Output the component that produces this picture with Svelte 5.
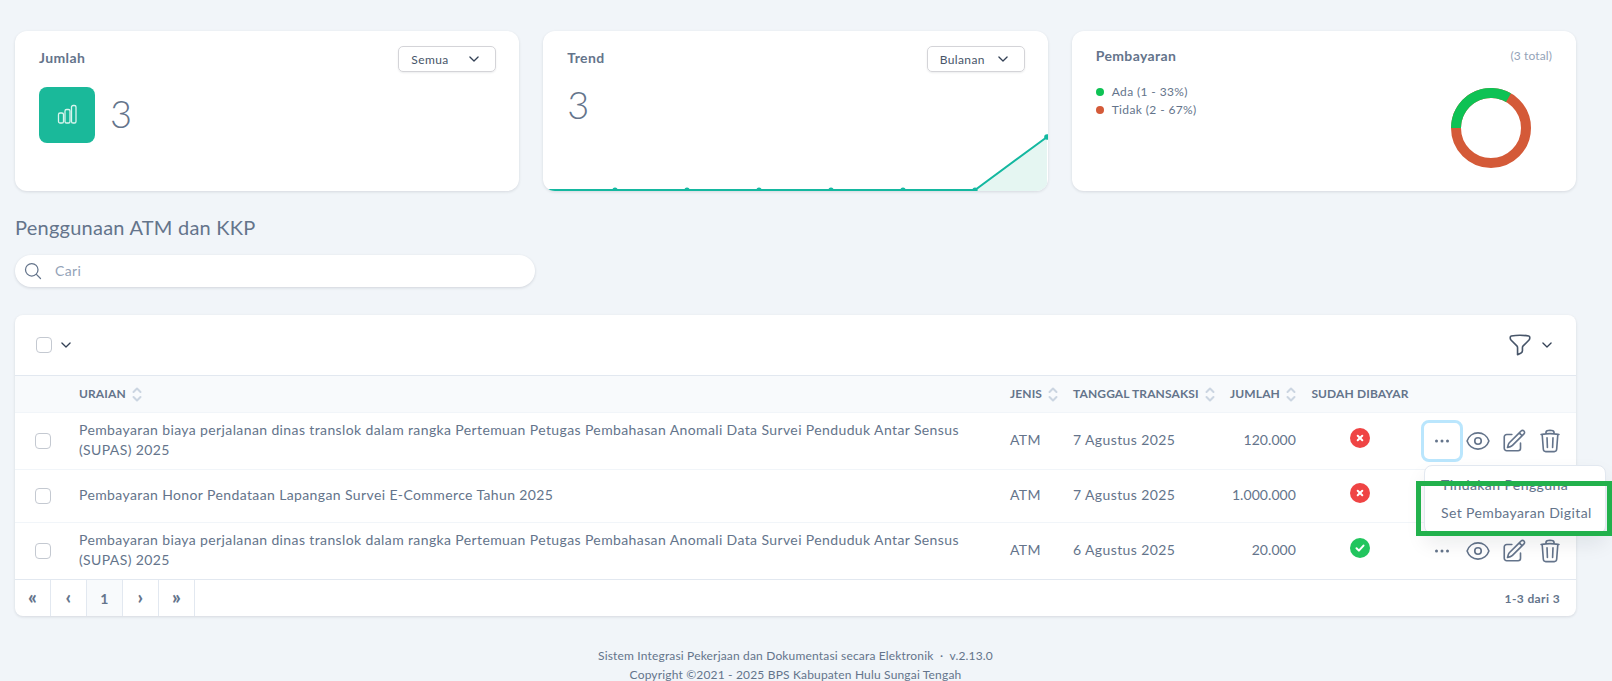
<script>
  const rows = [
    { text: 'Pembayaran biaya perjalanan dinas translok dalam rangka Pertemuan Petugas Pembahasan Anomali Data Survei Penduduk Antar Sensus (SUPAS) 2025', jenis: 'ATM', tanggal: '7 Agustus 2025', jumlah: '120.000', paid: false, menu: true },
    { text: 'Pembayaran Honor Pendataan Lapangan Survei E-Commerce Tahun 2025', jenis: 'ATM', tanggal: '7 Agustus 2025', jumlah: '1.000.000', paid: false, hideActions: true },
    { text: 'Pembayaran biaya perjalanan dinas translok dalam rangka Pertemuan Petugas Pembahasan Anomali Data Survei Penduduk Antar Sensus (SUPAS) 2025', jenis: 'ATM', tanggal: '6 Agustus 2025', jumlah: '20.000', paid: true }
  ];
  const dots = [615, 687, 759, 831, 903, 975];
  const pages = ['«', '‹', '1', '›', '»'];
</script>

{#snippet chevron()}
  <svg class="chev" viewBox="0 0 24 24" fill="none" stroke="currentColor" stroke-width="2.2" stroke-linecap="round" stroke-linejoin="round"><path d="M5 8.5l7 7 7-7" /></svg>
{/snippet}

{#snippet sort()}
  <svg class="sort" viewBox="0 0 10 15" fill="none" stroke="#cbd5e1" stroke-width="2" stroke-linecap="round" stroke-linejoin="round"><path d="M1.5 5L5 1.5 8.5 5M1.5 10L5 13.5 8.5 10" /></svg>
{/snippet}

<div class="page">
  <div class="stats">
    <section class="card">
      <div class="card-head">
        <h3>Jumlah</h3>
        <div class="select"><span>Semua</span>{@render chevron()}</div>
      </div>
      <div class="count-row">
        <div class="count-icon">
          <svg width="24" height="24" viewBox="0 0 24 24" fill="none" stroke="#d9f5ee" stroke-width="1.3"><rect x="3.5" y="10" width="5" height="10" rx="1.6" /><rect x="10" y="6.5" width="5" height="13.5" rx="1.6" /><rect x="16.5" y="2.5" width="4.5" height="17.5" rx="1.6" /></svg>
        </div>
        <div class="big">3</div>
      </div>
    </section>

    <section class="card trend">
      <div class="card-head">
        <h3>Trend</h3>
        <div class="select"><span>Bulanan</span>{@render chevron()}</div>
      </div>
      <div class="big trend-num">3</div>
      <svg class="chart" viewBox="543 130 505 61" width="505" height="61">
        <path d="M975 190L1047 137V191H975Z" fill="#e5f6f2" />
        <path d="M547 190H975L1047 137" fill="none" stroke="#14b8a0" stroke-width="2" />
        {#each dots as x}
          <circle cx={x} cy="190" r="2.6" fill="#14b8a0" />
        {/each}
        <circle cx="1047" cy="137" r="2.8" fill="#14b8a0" />
      </svg>
    </section>

    <section class="card pay">
      <div class="card-head pay-head">
        <h3>Pembayaran</h3>
        <span class="total">(3 total)</span>
      </div>
      <div class="pay-body">
        <ul class="legend">
          <li><i class="dot green"></i>Ada (1 - 33%)</li>
          <li><i class="dot red"></i>Tidak (2 - 67%)</li>
        </ul>
        <svg class="donut" width="80" height="80" viewBox="0 0 80 80" fill="none" stroke-width="10">
          <circle cx="40" cy="40" r="35" stroke="#d45a38" />
          <path d="M5 40A35 35 0 0 1 57.5 9.7" stroke="#0ec254" />
        </svg>
      </div>
    </section>
  </div>

  <h2 class="title">Penggunaan ATM dan KKP</h2>

  <div class="search">
    <svg width="20" height="20" viewBox="0 0 24 24" fill="none" stroke="#64748b" stroke-width="1.5" stroke-linecap="round"><path d="M21 21l-5.2-5.2M10.5 18a7.5 7.5 0 1 0 0-15 7.5 7.5 0 0 0 0 15z" /></svg>
    <span>Cari</span>
  </div>

  <div class="panel">
    <div class="toolbar">
      <div class="tool-left"><span class="check"></span>{@render chevron()}</div>
      <div class="tool-right">
        <svg width="26" height="26" viewBox="0 0 24 24" fill="none" stroke="#475569" stroke-width="1.5" stroke-linejoin="round"><path d="M12 3c2.755 0 5.455.232 8.083.678.533.09.917.556.917 1.096v1.044a2.25 2.25 0 01-.659 1.591l-5.432 5.432a2.25 2.25 0 00-.659 1.591v2.927a2.25 2.25 0 01-1.244 2.013L9.75 21v-6.568a2.25 2.25 0 00-.659-1.591L3.659 7.409A2.25 2.25 0 013 5.818V4.774c0-.54.384-1.006.917-1.096A48.32 48.32 0 0112 3z" /></svg>
        {@render chevron()}
      </div>
    </div>

    <table>
      <colgroup>
        <col style="width:52px" /><col /><col style="width:63px" /><col style="width:160px" /><col style="width:79px" /><col style="width:120px" /><col style="width:156px" />
      </colgroup>
      <thead>
        <tr>
          <th></th>
          <th><span class="th">URAIAN{@render sort()}</span></th>
          <th><span class="th">JENIS{@render sort()}</span></th>
          <th><span class="th">TANGGAL TRANSAKSI{@render sort()}</span></th>
          <th class="num"><span class="th">JUMLAH{@render sort()}</span></th>
          <th class="center">SUDAH DIBAYAR</th>
          <th></th>
        </tr>
      </thead>
      <tbody>
        {#each rows as row}
          <tr>
            <td class="cell-check"><span class="check"></span></td>
            <td>{row.text}</td>
            <td>{row.jenis}</td>
            <td>{row.tanggal}</td>
            <td class="num">{row.jumlah}</td>
            <td class="center">
              <span class="status" class:ok={row.paid}>
                <svg width="12" height="12" viewBox="0 0 12 12" fill="none" stroke="#fff" stroke-width="2" stroke-linecap="round" stroke-linejoin="round">
                  {#if row.paid}<path d="M2.5 6.3l2.4 2.3 4.6-5" />{:else}<path d="M3.7 3.7l4.6 4.6M8.300 3.700l-4.600 4.600" />{/if}
                </svg>
              </span>
            </td>
            <td class="actions-cell">
              {#if !row.hideActions}
                <div class="actions">
                  <button class="act" class:focus={row.menu} aria-label="Menu">
                    <svg width="24" height="24" viewBox="0 0 24 24" fill="#64748b"><circle cx="6.500" cy="12" r="1.500" /><circle cx="12" cy="12" r="1.500" /><circle cx="17.500" cy="12" r="1.500" /></svg>
                  </button>
                  <button class="act" aria-label="Lihat">
                    <svg width="26" height="26" viewBox="0 0 24 24" fill="none" stroke="#64748b" stroke-width="1.5" stroke-linecap="round" stroke-linejoin="round"><path d="M2.036 12.322a1.012 1.012 0 010-.639C3.423 7.51 7.36 4.5 12 4.5c4.638 0 8.573 3.007 9.963 7.178.07.207.07.431 0 .639C20.577 16.49 16.64 19.5 12 19.500c-4.638 0-8.573-3.007-9.963-7.178z" /><path d="M15 12a3 3 0 11-6 0 3 3 0 016 0z" /></svg>
                  </button>
                  <button class="act" aria-label="Ubah">
                    <svg width="26" height="26" viewBox="0 0 24 24" fill="none" stroke="#64748b" stroke-width="1.5" stroke-linecap="round" stroke-linejoin="round"><path d="M16.862 4.487l1.687-1.688a1.875 1.875 0 112.652 2.652L10.582 16.070a4.500 4.500 0 01-1.897 1.130L6 18l.8-2.685a4.500 4.500 0 011.130-1.897l8.932-8.931zm0 0L19.500 7.125M18 14v4.750A2.250 2.250 0 0115.750 21H5.250A2.250 2.250 0 013 18.750V8.250A2.250 2.250 0 015.250 6H10" /></svg>
                  </button>
                  <button class="act" aria-label="Hapus">
                    <svg width="26" height="26" viewBox="0 0 24 24" fill="none" stroke="#64748b" stroke-width="1.5" stroke-linecap="round" stroke-linejoin="round"><path d="M14.740 9l-.346 9m-4.788 0L9.260 9m9.968-3.210c.342.052.682.107 1.022.166m-1.022-.165L18.160 19.673a2.250 2.250 0 01-2.244 2.077H8.084a2.250 2.250 0 01-2.244-2.077L4.772 5.790m14.456 0a48.108 48.108 0 00-3.478-.397m-12 .562c.34-.059.68-.114 1.022-.165m0 0a48.110 48.110 0 013.478-.397m7.500 0v-.916c0-1.180-.91-2.164-2.090-2.201a51.964 51.964 0 00-3.320 0c-1.180.037-2.090 1.022-2.090 2.201v.916m7.500 0a48.667 48.667 0 00-7.500 0" /></svg>
                  </button>
                  {#if row.menu}
                    <div class="menu">
                      <div class="menu-title">Tindakan Pengguna</div>
                      <div class="menu-item">Set Pembayaran Digital</div>
                    </div>
                  {/if}
                </div>
              {/if}
            </td>
          </tr>
        {/each}
      </tbody>
    </table>

    <div class="pager">
      <div class="pages">
        {#each pages as p}
          <span class="pg" class:current={p === '1'} class:arrow={p !== '1'}>{p}</span>
        {/each}
      </div>
      <span class="range">1-3 dari 3</span>
    </div>
  </div>

  <footer>
    <div>Sistem Integrasi Pekerjaan dan Dokumentasi secara Elektronik &nbsp;·&nbsp; v.2.13.0</div>
    <div>Copyright ©2021 - 2025 BPS Kabupaten Hulu Sungai Tengah</div>
  </footer>

  <div class="highlight"></div>
</div>

<style>
  :global(html) { overflow: hidden; }
  :global(body) {
    background: #f1f5f9;
    font-family: "Lato", "Noto Sans", sans-serif;
    letter-spacing: 0.024em;
    color: #64748b;
  }

  .page {
    position: relative;
    box-sizing: border-box;
    width: 1612px;
    padding: 31px 36px 0 15px;
  }

  .stats {
    display: grid;
    grid-template-columns: repeat(3, 1fr);
    gap: 24px;
  }

  .card {
    position: relative;
    box-sizing: border-box;
    height: 160px;
    padding: 15px 24px 0;
    background: #fff;
    border-radius: 12px;
    box-shadow: 0 1px 3px rgba(15, 23, 42, 0.12);
    overflow: hidden;
  }

  .card-head {
    display: flex;
    justify-content: space-between;
    align-items: center;
    height: 26px;
  }

  h3 {
    margin: -4px 0 0;
    font-size: 14px;
    font-weight: 700;
    color: #64748b;
  }

  .select {
    box-sizing: border-box;
    display: flex;
    justify-content: space-between;
    align-items: center;
    width: 98px;
    height: 26px;
    margin-right: -1px;
    padding: 0 14px 0 12px;
    font-size: 12px;
    color: #475569;
    border: 1px solid #d4d4d8;
    border-radius: 5px;
    box-shadow: 0 1px 2px rgba(15, 23, 42, 0.08);
  }

  .chev {
    width: 14px;
    height: 14px;
    color: #334155;
    flex-shrink: 0;
  }

  .count-row {
    display: flex;
    align-items: center;
    gap: 15px;
    margin-top: 15px;
  }

  .count-icon {
    display: flex;
    align-items: center;
    justify-content: center;
    width: 56px;
    height: 56px;
    background: #1ab99a;
    border-radius: 8px;
  }

  .big {
    margin-top: -4px;
    font-size: 38px;
    font-weight: 300;
    line-height: 40px;
    color: #64748b;
  }

  .trend-num {
    margin-top: 12px;
  }

  .chart {
    display: block;
    margin: 0 -24px;
    position: absolute;
    left: 24px;
    bottom: 0;
  }

  .pay-head {
    align-items: flex-start;
    height: auto;
  }

  .pay-head h3 {
    margin: 0;
    line-height: 20px;
  }

  .total {
    font-size: 12px;
    line-height: 20px;
    letter-spacing: 0.01em;
    color: #94a3b8;
  }

  .pay-body {
    display: flex;
    justify-content: space-between;
    margin-top: 17px;
  }

  .legend {
    margin: 0;
    padding: 0;
    list-style: none;
    font-size: 12px;
    line-height: 18px;
    color: #64748b;
  }

  .legend li {
    display: flex;
    align-items: center;
    gap: 8px;
  }

  .dot {
    width: 8px;
    height: 8px;
    border-radius: 50%;
  }

  .dot.green { background: #0ec254; }
  .dot.red { background: #d45a38; }

  .donut {
    margin: 5px 21px 0 0;
  }

  .title {
    margin: 23px 0 0;
    font-size: 20px;
    font-weight: 400;
    line-height: 26px;
    letter-spacing: 0.012em;
    color: #64748b;
  }

  .search {
    display: flex;
    align-items: center;
    gap: 12px;
    width: 520px;
    height: 32px;
    margin-top: 15px;
    padding-left: 8px;
    box-sizing: border-box;
    background: #fff;
    border-radius: 16px;
    box-shadow: 0 1px 3px rgba(15, 23, 42, 0.14);
    font-size: 14px;
    color: #94a3b8;
  }

  .search span {
    padding-bottom: 2px;
  }

  .panel {
    margin-top: 28px;
    background: #fff;
    border-radius: 8px;
    box-shadow: 0 1px 3px rgba(15, 23, 42, 0.12);
  }

  .toolbar {
    display: flex;
    justify-content: space-between;
    align-items: center;
    height: 60px;
    padding: 0 22px 0 21px;
    box-sizing: border-box;
  }

  .tool-left, .tool-right {
    display: flex;
    align-items: center;
    gap: 7px;
  }

  .check {
    display: block;
    box-sizing: border-box;
    width: 16px;
    height: 16px;
    border: 1px solid #c4c9d1;
    border-radius: 4px;
  }

  table {
    width: 100%;
    table-layout: fixed;
    border-collapse: collapse;
    font-size: 14px;
    line-height: 20px;
  }

  th {
    height: 36px;
    padding: 0 12px;
    text-align: left;
    font-size: 12px;
    font-weight: 700;
    letter-spacing: 0.01em;
    white-space: nowrap;
    color: #64748b;
    background: #f8fafc;
    border-top: 1px solid #e2e8f0;
    border-bottom: 1px solid #f1f5f9;
  }

  .th {
    display: inline-flex;
    align-items: center;
    gap: 6px;
  }

  .sort {
    width: 10px;
    height: 15px;
  }

  td {
    padding: 6px 12px 8px;
    color: #64748b;
    border-bottom: 1px solid #f1f5f9;
  }

  tbody tr:nth-child(1) td { height: 57px; padding-top: 5px; padding-bottom: 8px; box-sizing: border-box; }
  tbody tr:nth-child(2) td { height: 53px; box-sizing: border-box; }
  tbody tr:nth-child(3) td { height: 57px; box-sizing: border-box; border-bottom-color: #e2e8f0; }

  .num {
    padding-left: 0;
    padding-right: 4px;
    text-align: right;
    white-space: nowrap;
  }

  td.num {
    letter-spacing: 0.005em;
  }

  .center {
    padding: 0;
    text-align: center;
  }

  tbody tr td.center { padding: 0 0 8px; }

  tbody tr td.cell-check {
    padding: 0 0 0 20px;
  }

  .status {
    display: inline-flex;
    align-items: center;
    justify-content: center;
    width: 20px;
    height: 20px;
    background: #ef4444;
    border-radius: 50%;
    vertical-align: middle;
  }

  .status.ok {
    background: #22c55e;
  }

  tbody tr td.actions-cell {
    padding: 0 0 0 4px;
  }

  .actions {
    position: relative;
    display: flex;
  }

  .act {
    display: flex;
    align-items: center;
    justify-content: center;
    box-sizing: border-box;
    width: 36px;
    height: 36px;
    padding: 0;
    background: none;
    border: 0;
    border-radius: 5px;
  }

  .act.focus {
    outline: 3px solid #bae6fd;
    outline-offset: 0;
  }

  .menu {
    position: absolute;
    z-index: 5;
    top: 42px;
    left: 0;
    box-sizing: border-box;
    width: 182px;
    height: 69px;
    padding: 10px 16px;
    background: #fff;
    border: 1px solid #e2e8f0;
    border-radius: 8px;
    box-shadow: 0 10px 20px rgba(15, 23, 42, 0.08);
  }

  .menu-title {
    font-weight: 500;
    line-height: 18px;
    color: #64748b;
  }

  .menu-item {
    margin-top: 9px;
    line-height: 20px;
    white-space: nowrap;
  }

  .pager {
    display: flex;
    justify-content: space-between;
    align-items: center;
    height: 36px;
    padding-right: 16px;
  }

  .pages {
    display: flex;
    height: 100%;
  }

  .pg {
    display: flex;
    align-items: center;
    justify-content: center;
    box-sizing: border-box;
    width: 36px;
    font-size: 14px;
    font-weight: 700;
    color: #64748b;
    border-right: 1px solid #e2e8f0;
  }

  .pg.arrow {
    padding-bottom: 3px;
    font-size: 19px;
    font-weight: 900;
  }

  .pg.current {
    background: #f8fafc;
  }

  .range {
    font-size: 12px;
    font-weight: 700;
    color: #64748b;
  }

  footer {
    padding-top: 30px;
    text-align: center;
    font-size: 12px;
    line-height: 19px;
    letter-spacing: 0.014em;
    color: #64748b;
  }

  .highlight {
    position: absolute;
    top: 481px;
    left: 1416px;
    box-sizing: border-box;
    width: 196px;
    height: 55px;
    border: 5px solid #22b14c;
    z-index: 10;
  }
</style>
